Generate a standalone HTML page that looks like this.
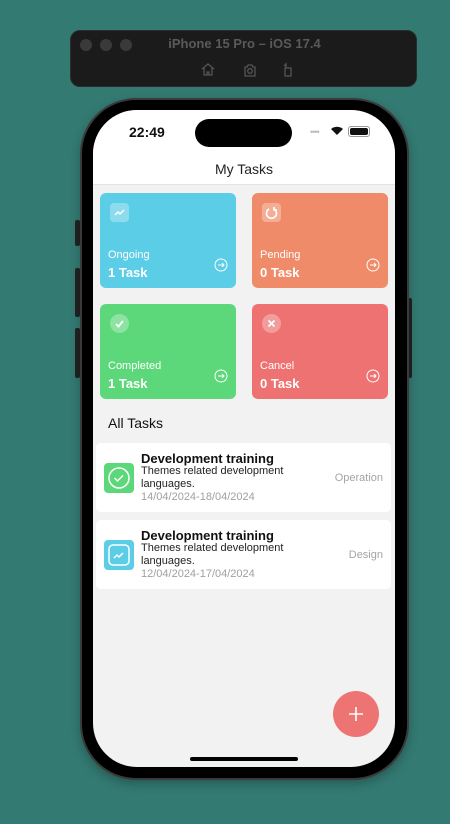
<!DOCTYPE html>
<html><head><meta charset="utf-8"><style>
*{margin:0;padding:0;box-sizing:border-box}
body{width:450px;height:824px;background:#337a72;position:relative;overflow:hidden;font-family:"Liberation Sans",sans-serif}
.abs{position:absolute}
.tb{left:70px;top:30px;width:347px;height:57px;background:#1b1b1b;border-radius:10px;border:1px solid #2c2c2c}
.dot{width:12px;height:12px;border-radius:50%;background:#3a3a3a;top:8px}
.phone{left:80px;top:98px;width:329px;height:682px;background:#000;border-radius:56px;border:2px solid #3a3a3a;box-shadow:0 4px 10px rgba(0,0,0,.25)}
.screen{left:93px;top:110px;width:302px;height:657px;background:#f2f2f2;border-radius:44px;overflow:hidden}
.btn{background:#222;border-radius:2px}
.card{width:136px;height:95px;border-radius:6px;color:#fff}
.ic{left:10px;top:10px;width:19px;height:19px;border-radius:4px;background:rgba(255,255,255,.3)}
.lab{left:8px;top:56px;font-size:11px}
.cnt{left:8px;top:72px;font-size:13px;font-weight:bold}
.arr{right:8px;top:65px;width:14px;height:14px}
.task{left:3px;width:295px;height:69px;background:#fff;border-radius:5px}
.t1{left:45px;top:8px;font-size:13px;font-weight:bold;color:#111}
.t2{left:45px;top:22px;font-size:11px;color:#222;line-height:13px;width:160px}
.t3{left:45px;top:48px;font-size:11px;color:#a0a0a0}
.tag{right:8px;font-size:11px;color:#a5a5a5}
.ticon{left:8px;top:20px;width:30px;height:30px;border-radius:4px}
</style></head><body>
<div class="abs tb">
<div class="abs dot" style="left:9px"></div><div class="abs dot" style="left:29px"></div><div class="abs dot" style="left:49px"></div>
<div class="abs" style="left:0;width:347px;top:5px;text-align:center;color:#5a5a5a;font-size:13px;font-weight:bold">iPhone 15 Pro – iOS 17.4</div>
<svg class="abs" style="left:128px;top:30px" width="100" height="18" fill="none" stroke="#555" stroke-width="1.3"><path d="M3 8l6-5 6 5M5 7v7h8V7M8 14v-3h2v3"/><path d="M46 6h2l1-2h4l1 2h2v9H46z"/><circle cx="51" cy="10" r="2.3"/><path d="M86 7h6v8h-6zM85 5l2-2v4"/></svg>
</div>
<div class="abs btn" style="left:75px;top:220px;width:5px;height:26px"></div>
<div class="abs btn" style="left:75px;top:268px;width:5px;height:49px"></div>
<div class="abs btn" style="left:75px;top:328px;width:5px;height:50px"></div>
<div class="abs btn" style="left:408px;top:298px;width:4px;height:80px"></div>
<div class="abs phone"></div>
<div class="abs screen">
<div class="abs" style="left:0;top:0;width:302px;height:75px;background:#fff;border-bottom:1px solid #e2e2e2"></div>
<div class="abs" style="left:36px;top:14px;font-size:14px;font-weight:bold;color:#111">22:49</div>
<div class="abs" style="left:102px;top:9px;width:97px;height:28px;background:#000;border-radius:14px"></div>
<div class="abs" style="left:217px;top:17px;color:#bbb;font-size:9px;letter-spacing:-1px">••••</div>
<svg class="abs" style="left:237px;top:15px" width="14" height="11"><path d="M7 10L1 4a9 9 0 0 1 12 0z" fill="#111"/></svg>
<div class="abs" style="left:255px;top:16px;width:22px;height:11px;border:1px solid #999;border-radius:3px;padding:1px"><div style="background:#111;height:100%;border-radius:2px"></div></div>
<div class="abs" style="left:0;width:302px;top:51px;text-align:center;font-size:14px;color:#222">My Tasks</div>

<div class="abs card" style="left:7px;top:83px;background:#5bcde6"><div class="abs ic"><svg width="19" height="19" fill="none" stroke="#fff" stroke-width="1.5"><path d="M5 12l3-3 2 2 4-4"/></svg></div><div class="abs lab">Ongoing</div><div class="abs cnt">1 Task</div><svg class="abs arr" fill="none" stroke="#fff" stroke-width="1"><circle cx="7" cy="7" r="6"/><path d="M4 7h6M8 5l2 2-2 2"/></svg></div>
<div class="abs card" style="left:159px;top:83px;background:#f08b69"><div class="abs ic"><svg width="19" height="19" fill="none" stroke="#fff" stroke-width="1.6"><path d="M12 6a5 5 0 1 1-5 0"/><path d="M12 4v3h3" /></svg></div><div class="abs lab">Pending</div><div class="abs cnt">0 Task</div><svg class="abs arr" fill="none" stroke="#fff" stroke-width="1"><circle cx="7" cy="7" r="6"/><path d="M4 7h6M8 5l2 2-2 2"/></svg></div>
<div class="abs card" style="left:7px;top:194px;background:#5cd87a"><div class="abs ic" style="border-radius:50%"><svg width="19" height="19" fill="none" stroke="#fff" stroke-width="1.8"><path d="M6 10l2.5 2.5L13 7"/></svg></div><div class="abs lab">Completed</div><div class="abs cnt">1 Task</div><svg class="abs arr" fill="none" stroke="#fff" stroke-width="1"><circle cx="7" cy="7" r="6"/><path d="M4 7h6M8 5l2 2-2 2"/></svg></div>
<div class="abs card" style="left:159px;top:194px;background:#ee7272"><div class="abs ic" style="border-radius:50%"><svg width="19" height="19" fill="none" stroke="#fff" stroke-width="1.8"><path d="M6.5 6.5l6 6M12.5 6.5l-6 6"/></svg></div><div class="abs lab">Cancel</div><div class="abs cnt">0 Task</div><svg class="abs arr" fill="none" stroke="#fff" stroke-width="1"><circle cx="7" cy="7" r="6"/><path d="M4 7h6M8 5l2 2-2 2"/></svg></div>

<div class="abs" style="left:15px;top:305px;font-size:14px;color:#111">All Tasks</div>
<div class="abs task" style="top:333px"><div class="abs ticon" style="background:#5cd87a"><svg width="30" height="30" fill="none" stroke="#fff" stroke-width="1.5"><circle cx="15" cy="15" r="10"/><path d="M10.5 15l3 3 5.5-5.5"/></svg></div><div class="abs t1">Development training</div><div class="abs t2">Themes related development languages.</div><div class="abs t3">14/04/2024-18/04/2024</div><div class="abs tag" style="top:29px">Operation</div></div>
<div class="abs task" style="top:410px"><div class="abs ticon" style="background:#5bcde6"><svg width="30" height="30" fill="none" stroke="#fff" stroke-width="1.5"><rect x="5" y="5" width="20" height="20" rx="4"/><path d="M10 18l3-3 2 2 4-4"/></svg></div><div class="abs t1">Development training</div><div class="abs t2">Themes related development languages.</div><div class="abs t3">12/04/2024-17/04/2024</div><div class="abs tag" style="top:29px">Design</div></div>

<div class="abs" style="left:240px;top:581px;width:46px;height:46px;border-radius:50%;background:#ee7474"><svg width="46" height="46" stroke="#fff" stroke-width="1.6"><path d="M23 16v14M16 23h14"/></svg></div>
<div class="abs" style="left:97px;top:647px;width:108px;height:4px;border-radius:2px;background:#000"></div>
</div>
</body></html>
